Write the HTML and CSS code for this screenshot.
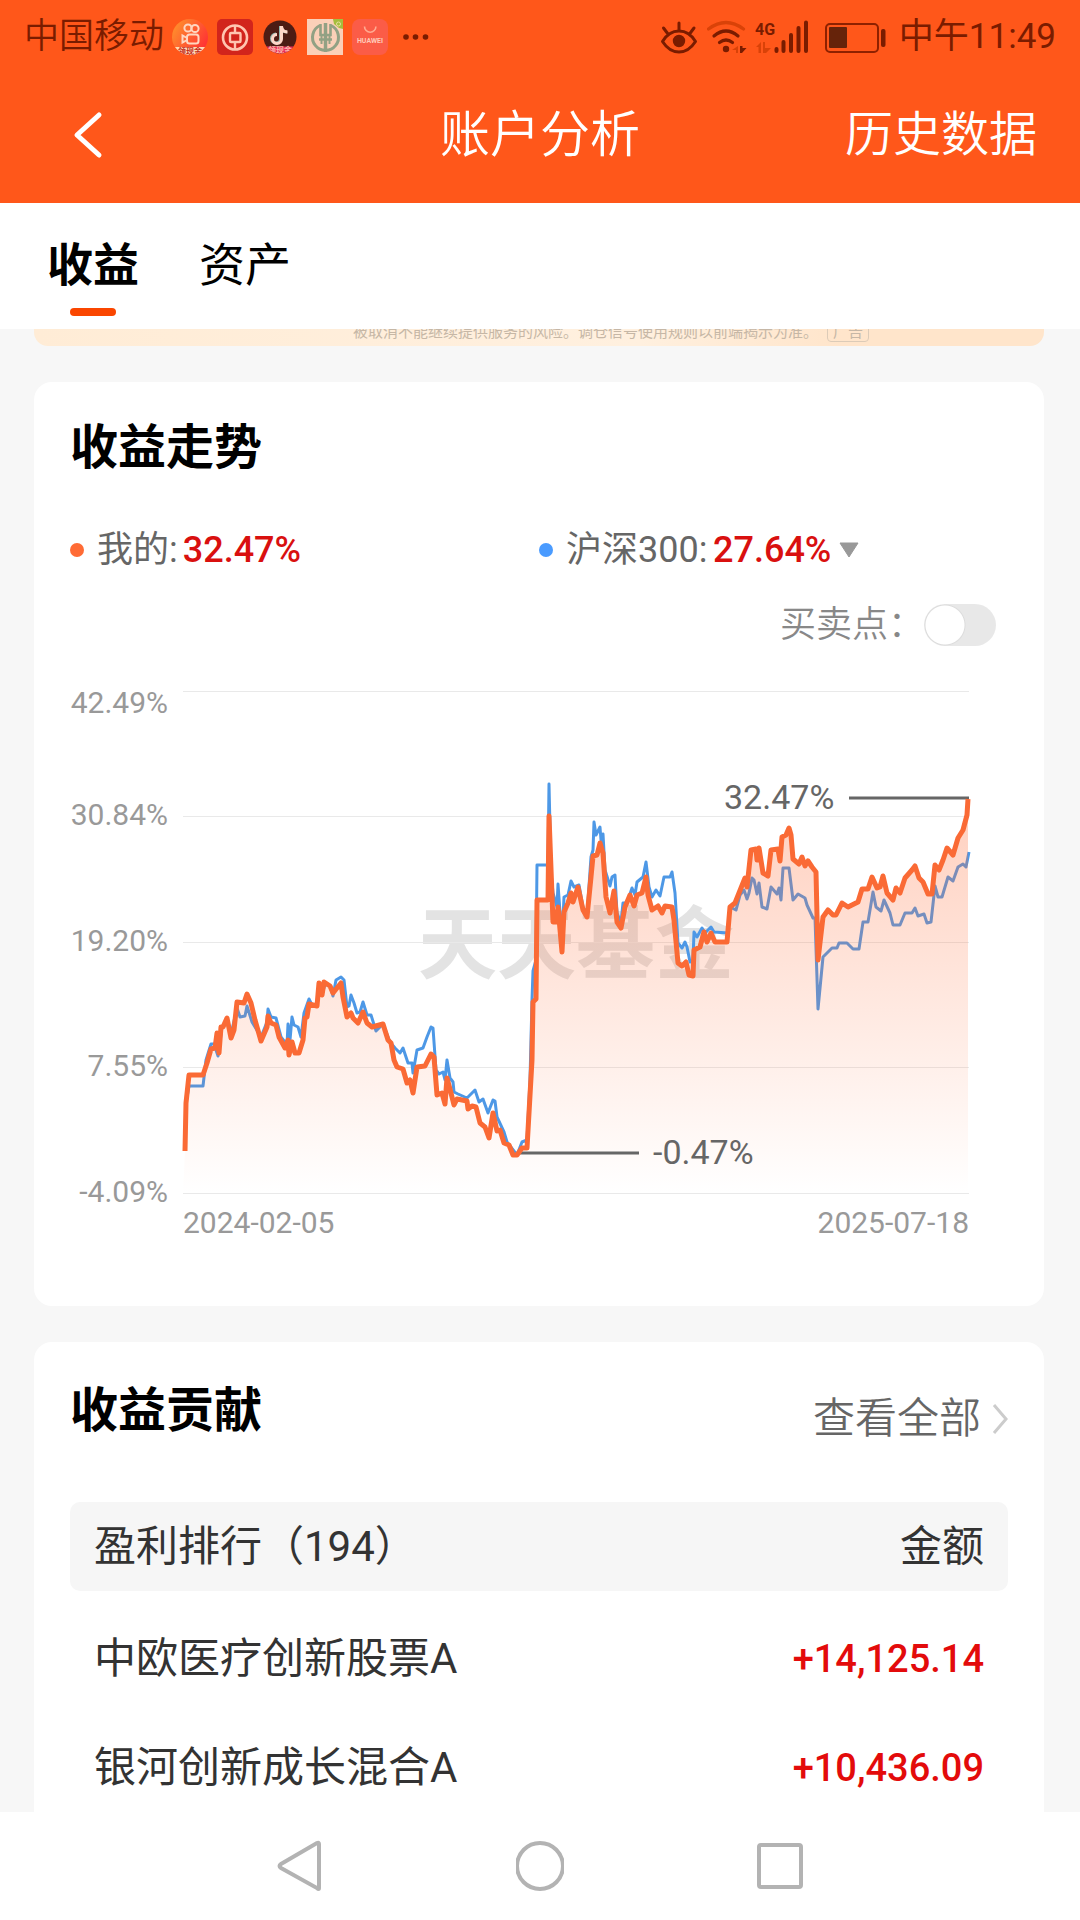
FILE: index.html
```html
<!DOCTYPE html>
<html lang="zh-CN">
<head>
<meta charset="utf-8">
<meta name="viewport" content="width=device-width, initial-scale=1">
<title>账户分析</title>
<link rel="stylesheet" href="styles.css">
</head>
<body>
<header class="top">
  <div class="status">
    <span class="carrier">中国移动</span>
    <div class="apps">
      <svg class="app" viewBox="0 0 36 36">
        <defs>
          <linearGradient id="ks" x1="0" y1="0" x2="1" y2="0.6"><stop offset="0" stop-color="#ff9a2b"/><stop offset="1" stop-color="#ff3434"/></linearGradient>
          <clipPath id="round"><circle cx="18" cy="18" r="18"/></clipPath>
        </defs>
        <g clip-path="url(#round)">
          <rect width="36" height="36" fill="url(#ks)"/>
          <g fill="none" stroke="#ffd6c0" stroke-width="2"><circle cx="16" cy="9" r="3.6"/><circle cx="23" cy="9.500" r="3.600"/><rect x="15" y="15.500" width="11.500" height="9" rx="2.500"/><path d="M15 19 10.500 16.500v7L15 21"/></g>
          <rect y="28" width="36" height="8" fill="#ffd9b4"/>
          <text x="18" y="35" class="badge red">领现金</text>
        </g>
      </svg>
      <svg class="app" viewBox="0 0 36 36">
        <rect width="36" height="36" rx="5" fill="#d2241c"/>
        <circle cx="18" cy="18.500" r="12" fill="none" stroke="#ffc5b0" stroke-width="2.600"/>
        <rect x="13" y="14" width="10.500" height="9" rx="1" fill="none" stroke="#ffc5b0" stroke-width="2.400"/>
        <path d="M18 6v8M18 23v8" stroke="#ffc5b0" stroke-width="2.400"/>
      </svg>
      <svg class="app" viewBox="0 0 36 36">
        <defs><clipPath id="disc"><circle cx="18" cy="18" r="16.500"/></clipPath></defs>
        <g clip-path="url(#disc)">
          <rect width="36" height="36" fill="#4d1c14"/>
          <g fill="none" stroke-width="3"><path d="M18.500 7v12.500a4.500 4.500 0 1 1-4.500-4.500M18.500 7.500c.5 3.500 3 5.500 6.500 5.500" stroke="#8fb5ad"/><path d="M19.500 7v13a4.500 4.500 0 1 1-4.500-4.500M19.500 7.500c.5 3.500 3 5.500 6 5.500" stroke="#ffd7c8"/></g>
          <rect y="27.500" width="36" height="9" fill="#e8305a"/>
          <text x="18" y="34" class="badge pink">领现金</text>
        </g>
      </svg>
      <svg class="app" viewBox="0 0 36 36">
        <rect width="36" height="36" fill="#fbd0b8"/>
        <path d="M26 0h10v10l-4-1-5-4z" fill="#a5bd3c"/><circle cx="31.500" cy="5" r="2" fill="none" stroke="#e3dfa0"/>
        <g fill="none" stroke="#92a184" stroke-width="3"><path d="M13 6.500a13 13 0 1 0 11 0" /><path d="M18.500 4v29" stroke-width="3.500"/><path d="M13.500 5v11h10V5M12 20.500h13" stroke-width="2.600"/><path d="M14.500 17v8M22.500 17v8" stroke-width="2"/></g>
      </svg>
      <svg class="app" viewBox="0 0 36 36">
        <rect width="36" height="36" rx="8" fill="#fb5c47"/>
        <path d="M12.500 7.500a5.700 5.700 0 0 0 11.400 0" fill="none" stroke="#ffab92" stroke-width="1.600"/>
        <text x="18" y="24" class="huawei">HUAWEI</text>
      </svg>
      <svg class="app" viewBox="0 0 36 36" fill="#7a1c00"><circle cx="9" cy="18" r="2.800"/><circle cx="18.500" cy="18" r="2.800"/><circle cx="28.500" cy="18" r="2.800"/></svg>
    </div>
    <div class="signals">
      <svg width="40" height="40" viewBox="658 16 40 40" fill="none" stroke="#7a1c00" stroke-width="3" stroke-linecap="round" stroke-linejoin="round">
        <path d="M661.500 40.500C666 33 672 30 678 30s12 3 16.500 10.500C690 47.500 684 51 678 51s-12-3.500-16.500-10.500zM678 22v7M662.500 27l4.500 6M693 27l-4.500 6"/><circle cx="678" cy="40" r="4.700" fill="#7a1c00"/>
      </svg>
      <svg width="40" height="40" viewBox="706 16 40 40" fill="none" stroke="#7a1c00" stroke-width="3.200" stroke-linecap="round">
        <path d="M707.500 28q17.500-13 35 0" stroke="#d94208"/><path d="M713 35q12-10 24 0M718.500 41.500q6.500-5 13 0"/><circle cx="725" cy="48" r="3.200" fill="#7a1c00" stroke="none"/>
        <path d="M737 45v7h-2v-3h-4z" fill="#d94208" stroke="none"/><path d="M739 45h2.500v2h4l-4.500 5h-2z" fill="#7a1c00" stroke="none"/>
      </svg>
      <svg width="58" height="40" viewBox="754 16 58 40">
        <text x="754" y="34" class="gen">4G</text>
        <path d="M755 46l5-5v11h-2.500v-6zM762 41h2v6h6l-5 5h-3z" fill="#d94208"/>
        <path d="M775.500 48v2M782.500 41v9M790 34v16M797.500 27v23M805 21.500v28.500" stroke="#7a1c00" stroke-width="4" stroke-linecap="round"/>
      </svg>
      <svg width="70" height="40" viewBox="820 16 70 40">
        <rect x="825" y="23" width="52" height="28" rx="4" fill="none" stroke="#8e2100" stroke-width="2"/><rect x="828" y="26" width="18" height="21" rx="1" fill="#66230a"/><rect x="880" y="28" width="4.500" height="18" rx="2" fill="#7a1c00"/>
      </svg>
      <time class="clock">中午11:49</time>
    </div>
  </div>
  <div class="titlebar">
    <button class="back" type="button" aria-label="返回"><svg width="30" height="48" viewBox="0 0 30 48" fill="none" stroke="#fff" stroke-width="5" stroke-linecap="round" stroke-linejoin="round"><path d="M26 4 4 24l22 20"/></svg></button>
    <h1 class="title">账户分析</h1>
    <a class="history" href="#">历史数据</a>
  </div>
</header>
<nav class="tabs">
  <button class="tab active" type="button">收益</button>
  <button class="tab" type="button">资产</button>
</nav>
<main class="content">
  <div class="banner"><p class="notice">被取消不能继续提供服务的风险。调仓信号使用规则以前端揭示为准。<span class="ad">广告</span></p></div>
  <section class="card trend">
    <h2 class="card-title">收益走势</h2>
    <div class="legend">
      <div class="series"><i class="dot mine"></i><span>我的:</span><strong class="rate">32.47%</strong></div>
      <div class="series">
        <i class="dot index"></i>
        <select class="picker" aria-label="对比指数"><option>沪深300:</option></select>
        <strong class="rate">27.64%</strong>
        <svg class="caret" width="20" height="16" viewBox="0 0 20 16"><path d="M1 1h18l-9 14z" fill="#999" stroke="#999" stroke-linejoin="round"/></svg>
      </div>
    </div>
    <label class="points"><span>买卖点：</span><input class="switch" type="checkbox" role="switch"></label>
    <svg class="chart" viewBox="70 680 938 570">
      <defs><linearGradient id="area" x1="0" y1="799" x2="0" y2="1193" gradientUnits="userSpaceOnUse"><stop offset="0" stop-color="#ff6b35" stop-opacity="0.32"/><stop offset="1" stop-color="#ff6b35" stop-opacity="0"/></linearGradient></defs>
      <text x="576" y="973" class="mark">天天基金</text>
      <path class="grid" d="M183 691.500H969M183 816.500H969M183 942.500H969M183 1067.500H969M183 1193.500H969"/>
      <path class="line-index" d="M185 1151L186 1103 189 1086 203 1086 206 1060 211 1044 214 1044 218 1056 222 1027 227 1020 231 1034 237 1008 240 1017 245 1016 247 1006 252 1022 261 1037 267 1022 268 1009 271 1017 276 1018 281 1037 287 1045 288 1024 290 1040 292 1017 294 1025 298 1027 301 1037 304 1013 309 999 312 1005 317 1006 320 985 322 995 325 984 330 986 333 996 336 980 341 977 344 980 347 1007 349 1006 351 995 354 1003 357 1013 360 1012 363 1002 367 1015 371 1015 376 1031 383 1024 390 1042 395 1048 400 1053 403 1048 408 1063 412 1063 413 1073 417 1050 423 1048 427 1037 431 1027 433 1028 436 1070 439 1074 443 1072 445 1080 447 1060 450 1078 453 1082 454 1092 458 1094 467 1098 472 1093 475 1090 479 1102 483 1099 488 1113 493 1100 495 1101 497 1117 504 1132 507 1142 517 1155 522 1142 527 1140 530 1080 532 1000 533 971 536 960 537 865 548 865 549 784 551 872 553 893 557 907 558 884 562 940 564 897 568 895 571 881 574 887 579 885 583 907 587 915 591 857 593 850 594 822 596 835 600 827 601 840 603 834 605 870 610 886 612 877 615 875 617 913 621 923 623 903 627 903 632 888 635 895 637 882 643 877 646 862 649 887 652 897 656 890 660 896 664 877 670 877 672 872 675 893 678 943 682 948 685 942 687 947 690 962 693 960 694 932 697 937 702 928 705 933 711 927 714 932 728 933 730 907 736 910 740 895 744 890 747 899 749 893 752 878 754 880 757 894 759 883 762 907 767 909 771 887 777 894 779 888 781 900 783 868 789 868 793 900 798 894 805 898 807 905 813 918 815 918 818 1009 823 957 832 948 837 948 839 943 847 943 853 949 859 949 863 922 868 922 873 892 876 907 881 911 884 900 890 913 893 925 900 925 905 913 912 913 915 908 918 916 924 914 927 923 931 922 935 886 938 897 942 897 948 877 953 881 958 867 963 864 966 867 969 852"/>
      <path fill="url(#area)" d="M183 1193L185 1151 186 1103 189 1075 203 1075 207 1063 211 1049 215 1048 217 1033 219 1053 221 1027 223 1027 227 1018 231 1038 234 1030 237 1002 244 1003 247 994 251 1003 255 1020 261 1041 267 1027 268 1016 271 1023 276 1025 279 1037 285 1048 288 1040 289 1055 292 1042 295 1053 299 1053 303 1040 305 1018 307 1017 309 1004 317 1006 319 983 322 995 324 982 330 986 333 993 337 988 341 983 343 997 347 1017 351 1013 353 1018 358 1023 363 1012 367 1023 372 1027 383 1024 388 1040 391 1043 394 1060 397 1067 403 1069 407 1083 410 1080 413 1093 417 1067 425 1066 431 1054 434 1057 437 1095 442 1093 445 1104 447 1078 451 1093 454 1105 457 1099 467 1101 468 1109 472 1106 476 1107 480 1123 485 1127 489 1138 493 1113 497 1131 500 1130 504 1143 509 1145 513 1155 517 1155 522 1148 527 1148 532 1060 533 1002 536 999 537 900 548 900 549 816 553 922 556 922 558 907 562 952 564 912 568 903 571 893 573 902 578 887 583 910 587 917 591 877 593 856 597 855 600 843 603 853 606 897 610 913 614 891 617 922 621 928 625 907 630 895 634 906 637 895 642 893 646 877 648 895 652 910 658 906 662 913 665 906 672 907 674 920 678 963 682 966 686 962 689 975 693 976 694 950 700 947 704 932 707 942 711 933 715 942 727 942 730 907 735 903 739 893 745 878 747 887 751 850 756 849 757 860 759 848 763 873 768 876 771 850 778 849 780 861 782 837 786 835 789 828 791 835 793 859 799 864 802 857 805 866 808 861 812 867 816 872 818 960 823 917 828 910 833 915 836 915 842 903 848 907 858 902 862 889 868 889 872 877 877 888 880 887 883 876 887 893 893 900 896 888 900 893 905 878 912 870 915 866 919 878 923 882 928 894 932 894 935 865 939 870 943 860 947 848 953 855 958 838 963 830 967 815 968 799V1193z"/>
      <path class="callout" d="M849 798H969M517 1153H639"/>
      <path class="line-mine" d="M185 1151L186 1103 189 1075 203 1075 207 1063 211 1049 215 1048 217 1033 219 1053 221 1027 223 1027 227 1018 231 1038 234 1030 237 1002 244 1003 247 994 251 1003 255 1020 261 1041 267 1027 268 1016 271 1023 276 1025 279 1037 285 1048 288 1040 289 1055 292 1042 295 1053 299 1053 303 1040 305 1018 307 1017 309 1004 317 1006 319 983 322 995 324 982 330 986 333 993 337 988 341 983 343 997 347 1017 351 1013 353 1018 358 1023 363 1012 367 1023 372 1027 383 1024 388 1040 391 1043 394 1060 397 1067 403 1069 407 1083 410 1080 413 1093 417 1067 425 1066 431 1054 434 1057 437 1095 442 1093 445 1104 447 1078 451 1093 454 1105 457 1099 467 1101 468 1109 472 1106 476 1107 480 1123 485 1127 489 1138 493 1113 497 1131 500 1130 504 1143 509 1145 513 1155 517 1155 522 1148 527 1148 532 1060 533 1002 536 999 537 900 548 900 549 816 553 922 556 922 558 907 562 952 564 912 568 903 571 893 573 902 578 887 583 910 587 917 591 877 593 856 597 855 600 843 603 853 606 897 610 913 614 891 617 922 621 928 625 907 630 895 634 906 637 895 642 893 646 877 648 895 652 910 658 906 662 913 665 906 672 907 674 920 678 963 682 966 686 962 689 975 693 976 694 950 700 947 704 932 707 942 711 933 715 942 727 942 730 907 735 903 739 893 745 878 747 887 751 850 756 849 757 860 759 848 763 873 768 876 771 850 778 849 780 861 782 837 786 835 789 828 791 835 793 859 799 864 802 857 805 866 808 861 812 867 816 872 818 960 823 917 828 910 833 915 836 915 842 903 848 907 858 902 862 889 868 889 872 877 877 888 880 887 883 876 887 893 893 900 896 888 900 893 905 878 912 870 915 866 919 878 923 882 928 894 932 894 935 865 939 870 943 860 947 848 953 855 958 838 963 830 967 815 968 799"/>
      <g class="axis end"><text x="168" y="713">42.49%</text><text x="168" y="825">30.84%</text><text x="168" y="951">19.20%</text><text x="168" y="1076">7.55%</text><text x="168" y="1202">-4.09%</text><text x="969" y="1233">2025-07-18</text></g>
      <text x="183" y="1233" class="axis">2024-02-05</text>
      <text x="724" y="809" class="peak">32.47%</text>
      <text x="653" y="1164" class="peak">-0.47%</text>
    </svg>
  </section>
  <section class="card">
    <div class="card-head">
      <h2 class="card-title">收益贡献</h2>
      <a class="more" href="#">查看全部<svg width="16" height="32" viewBox="0 0 16 32" fill="none" stroke="#ccc" stroke-width="3"><path d="M2 2l12 14L2 30"/></svg></a>
    </div>
    <table class="ranking">
      <thead><tr><th scope="col">盈利排行（194）</th><th scope="col">金额</th></tr></thead>
      <tbody>
        <tr><td>中欧医疗创新股票A</td><td>+14,125.14</td></tr>
        <tr><td>银河创新成长混合A</td><td>+10,436.09</td></tr>
      </tbody>
    </table>
  </section>
</main>
<footer class="system">
  <button type="button" aria-label="返回"><svg width="48" height="56" viewBox="0 0 48 56"><path d="M43 6v44q0 2-2 0L5 30q-3-2 0-4L41 5q2-1 2 1z"/></svg></button>
  <button type="button" aria-label="主屏幕"><svg width="48" height="56" viewBox="0 0 48 56"><circle cx="24" cy="28" r="23"/></svg></button>
  <button type="button" aria-label="最近任务"><svg width="48" height="56" viewBox="0 0 48 56"><rect x="3" y="7" width="42" height="42" rx="2"/></svg></button>
</footer>
</body>
</html>
```
FILE: styles.css
```css
* { box-sizing: border-box; margin: 0; }
body {
  display: flex;
  flex-direction: column;
  height: 100vh;
  background: #f7f7f7;
  color: #333;
  font-family: Roboto, "Noto Sans CJK SC", sans-serif;
}
button, select { border: 0; padding: 0; background: none; color: inherit; font: inherit; }
a { color: inherit; text-decoration: none; }
svg { display: block; }

.top { background: #ff571a; padding-bottom: 8px; }
.status {
  display: flex;
  align-items: center;
  gap: 8px;
  height: 74px;
  padding: 0 24px;
  color: #7a1c00;
  font-size: 35px;
  line-height: 42px;
}
.carrier { font-weight: 350; }
.apps { display: flex; gap: 9px; }
.app { width: 36px; height: 36px; }
.badge { font-size: 8px; font-weight: 700; text-anchor: middle; }
.red { fill: #c22a18; }
.pink { fill: #ffb3a8; }
.huawei { font-size: 7px; font-weight: 700; text-anchor: middle; fill: #ffc8b8; }
.signals { display: flex; align-items: center; gap: 8px; margin-left: auto; }
.gen { font-size: 16px; font-weight: 700; fill: #7a1c00; }

.titlebar {
  display: grid;
  grid-template-columns: 1fr auto 1fr;
  align-items: center;
  height: 121px;
  padding: 0 43px 0 73px;
  color: #fff;
  font-weight: 350;
  line-height: 60px;
}
.back { justify-self: start; }
.title { margin-left: -30px; font-size: 50px; font-weight: 350; }
.history { justify-self: end; font-size: 48px; }

.tabs {
  display: flex;
  gap: 60px;
  height: 126px;
  padding: 0 47px;
  background: #fff;
  color: #000;
  font-size: 46px;
  line-height: 56px;
}
.tab { display: flex; flex-direction: column; align-items: center; padding-top: 34px; }
.tab.active { font-weight: 700; }
.tab.active::after { content: ""; width: 46px; height: 8px; margin-top: 15px; border-radius: 4px; background: #fa4600; }

.content {
  flex: 1;
  min-height: 0;
  display: flex;
  flex-direction: column;
  padding: 0 36px 0 34px;
  overflow-y: auto;
  scrollbar-width: none;
}
.content > * { flex: none; }
.banner {
  display: flex;
  align-items: flex-end;
  justify-content: center;
  height: 17px;
  margin-bottom: 36px;
  padding-left: 144px;
  overflow: hidden;
  border-radius: 0 0 14px 14px;
  background: linear-gradient(90deg, #ffecd6, #fff0df 60%, #ffe5cb 80%);
}
.notice { display: flex; align-items: center; gap: 9px; padding-bottom: 4px; font-size: 15px; line-height: 20px; color: #c6b7a6; }
.ad { padding: 0 5px; border: 1px solid #dccbb8; border-radius: 4px; line-height: 18px; }

.card { padding: 36px; margin-bottom: 36px; border-radius: 18px; background: #fff; }
.trend { padding: 38px 36px 56px; }
.card-title { font-size: 48px; line-height: 56px; font-weight: 700; color: #000; }
.legend {
  display: grid;
  grid-template-columns: 1fr 1fr;
  margin-top: 53px;
  font-size: 36px;
  line-height: 42px;
  color: #666;
}
.series { display: flex; align-items: center; height: 42px; }
.dot { width: 14px; height: 14px; margin-right: 13px; border-radius: 50%; }
.mine { background: #ff6b35; }
.index { background: #4a9bff; }
.picker { appearance: none; height: 42px; }
.rate { margin-left: 5px; font-weight: 500; color: #d9100f; }
.caret { margin-left: 8px; }
.points {
  display: flex;
  align-items: center;
  justify-content: flex-end;
  height: 42px;
  margin: 33px 12px 34px;
  font-size: 36px;
  line-height: 40px;
  font-weight: 350;
  color: #888;
}
.switch {
  appearance: none;
  width: 72px;
  height: 42px;
  margin: 0;
  border-radius: 21px;
  background: radial-gradient(circle at 21px 50%, #fff 19px, #dcdcdc 20px, #e8e8e8 21px);
}
.switch:checked { background: radial-gradient(circle at 51px 50%, #fff 19px, #ff571a 20px); }
.chart { width: 100%; }
.grid { stroke: #e9e9e9; stroke-width: 1; }
.mark { font-size: 79px; font-weight: 700; text-anchor: middle; fill: #e3e3e3; }
.line-index, .line-mine { fill: none; stroke-linejoin: round; }
.line-index { stroke: #4d98e6; stroke-width: 3; }
.line-mine { stroke: #fa6a35; stroke-width: 5; }
.callout { stroke: #666; stroke-width: 3; }
.axis { font-size: 30px; fill: #999; }
.end { text-anchor: end; }
.peak { font-size: 34px; fill: #666; }

.card-head { display: flex; justify-content: space-between; height: 64px; margin-top: 5px; }
.more {
  display: flex;
  align-items: center;
  align-self: flex-end;
  gap: 11px;
  font-size: 42px;
  line-height: 56px;
  font-weight: 350;
  color: #666;
}
.ranking { width: 100%; margin-top: 55px; border-collapse: collapse; font-size: 42px; line-height: 50px; }
.ranking th { height: 89px; padding: 0 24px; background: #f6f6f6; text-align: left; font-weight: 400; }
.ranking th:first-child { border-radius: 10px 0 0 10px; }
.ranking th:last-child { border-radius: 0 10px 10px 0; text-align: right; }
.ranking td { height: 109px; padding: 0 24px; }
.ranking tbody tr:first-child td { height: 122px; padding-top: 13px; }
.ranking td:last-child { text-align: right; font-size: 38px; font-weight: 500; color: #e30b0b; }

.system { display: flex; justify-content: center; align-items: center; gap: 192px; height: 108px; background: #fff; }
.system svg { fill: none; stroke: #b3b3b3; stroke-width: 4; }
```
